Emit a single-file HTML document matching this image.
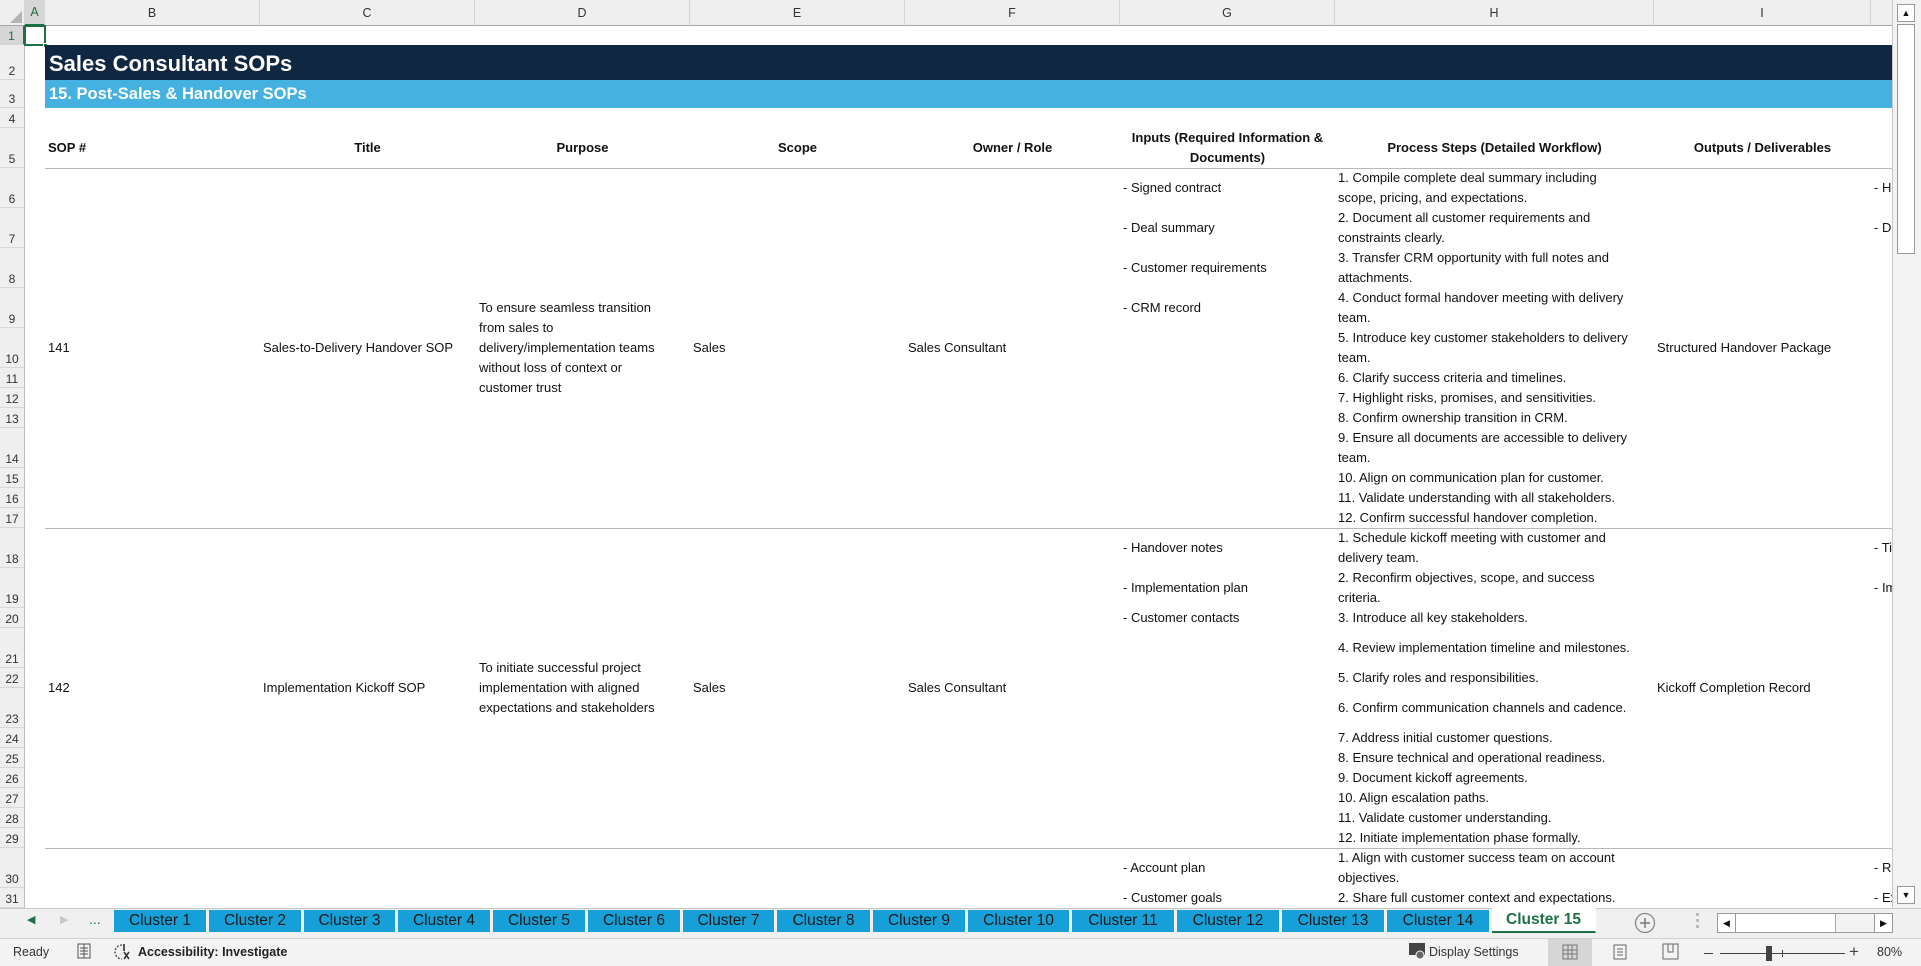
<!DOCTYPE html>
<html><head><meta charset="utf-8"><style>
*{margin:0;padding:0;box-sizing:border-box}
body{width:1921px;height:966px;overflow:hidden;background:#fff;font-family:"Liberation Sans",sans-serif;font-size:13px;color:#111;position:relative}
.a{position:absolute}
.c{position:absolute;display:flex;align-items:center;white-space:nowrap;line-height:20px;overflow:hidden}
.rh{position:absolute;left:0;width:25px;background:#efefef;border-bottom:1px solid #d8d8d8;border-right:1px solid #bdbdbd;display:flex;align-items:flex-end;justify-content:center;font-size:12px;color:#333;padding-bottom:1px}
.ch{position:absolute;top:0;height:26px;background:#efefef;border-right:1px solid #d4d4d4;border-bottom:1px solid #a8a8a8;display:flex;align-items:center;justify-content:center;font-size:12.5px;color:#333}
.hd{font-weight:bold;justify-content:center;text-align:center;line-height:20px}
.hl{position:absolute;left:45px;width:1847px;height:1px;background:#b8b8b8}
.tab{position:absolute;top:910px;height:22px;background:#17a0d8;color:#1a1a1a;font-size:15.5px;display:flex;align-items:center;justify-content:center;border-right:1px solid #fff}
.sb{position:absolute;top:938px;height:28px;display:flex;align-items:center;font-size:12.5px;color:#333}
</style></head><body>

<!-- column headers -->
<div class="ch" style="left:0;width:25px"><svg width="12" height="12" style="position:absolute;right:2px;bottom:2px"><path d="M12 0V12H0Z" fill="#b5b5b5"/></svg></div>
<div class="ch" style="left:25px;width:20px;background:#d6d6d6;color:#1e6e3e;border-bottom:2px solid #1e7145">A</div>
<div class="ch" style="left:45px;width:215px">B</div>
<div class="ch" style="left:260px;width:215px">C</div>
<div class="ch" style="left:475px;width:215px">D</div>
<div class="ch" style="left:690px;width:215px">E</div>
<div class="ch" style="left:905px;width:215px">F</div>
<div class="ch" style="left:1120px;width:215px">G</div>
<div class="ch" style="left:1335px;width:319px">H</div>
<div class="ch" style="left:1654px;width:217px">I</div>
<div class="ch" style="left:1871px;width:25px"></div>

<!-- row headers -->
<div class="rh" style="top:26px;height:19px;background:#d6d6d6;color:#1e6e3e;border-right:2px solid #1e7145">1</div>
<div class="rh" style="top:45px;height:35px">2</div>
<div class="rh" style="top:80px;height:28px">3</div>
<div class="rh" style="top:108px;height:20px">4</div>
<div class="rh" style="top:128px;height:40px">5</div>
<div class="rh" style="top:168px;height:40px">6</div>
<div class="rh" style="top:208px;height:40px">7</div>
<div class="rh" style="top:248px;height:40px">8</div>
<div class="rh" style="top:288px;height:40px">9</div>
<div class="rh" style="top:328px;height:40px">10</div>
<div class="rh" style="top:368px;height:20px">11</div>
<div class="rh" style="top:388px;height:20px">12</div>
<div class="rh" style="top:408px;height:20px">13</div>
<div class="rh" style="top:428px;height:40px">14</div>
<div class="rh" style="top:468px;height:20px">15</div>
<div class="rh" style="top:488px;height:20px">16</div>
<div class="rh" style="top:508px;height:20px">17</div>
<div class="rh" style="top:528px;height:40px">18</div>
<div class="rh" style="top:568px;height:40px">19</div>
<div class="rh" style="top:608px;height:20px">20</div>
<div class="rh" style="top:628px;height:40px">21</div>
<div class="rh" style="top:668px;height:20px">22</div>
<div class="rh" style="top:688px;height:40px">23</div>
<div class="rh" style="top:728px;height:20px">24</div>
<div class="rh" style="top:748px;height:20px">25</div>
<div class="rh" style="top:768px;height:20px">26</div>
<div class="rh" style="top:788px;height:20px">27</div>
<div class="rh" style="top:808px;height:20px">28</div>
<div class="rh" style="top:828px;height:20px">29</div>
<div class="rh" style="top:848px;height:40px">30</div>
<div class="rh" style="top:888px;height:20px">31</div>

<!-- selected cell A1 -->
<div class="a" style="left:24px;top:25px;width:22px;height:21px;border:2px solid #1e7145"></div>
<div class="a" style="left:43px;top:43px;width:5px;height:5px;background:#1e7145;border:1px solid #fff"></div>

<!-- title bars -->
<div class="c" style="left:45px;top:45px;width:1847px;height:35px;background:#0f2740;color:#fff;font-weight:bold;font-size:22px;padding-left:4px;padding-top:3px">Sales Consultant SOPs</div>
<div class="c" style="left:45px;top:80px;width:1847px;height:28px;background:#45b1e0;color:#fff;font-weight:bold;font-size:16.5px;padding-left:4px">15. Post-Sales &amp; Handover SOPs</div>

<!-- header row 5 -->
<div class="c" style="left:48px;top:128px;height:40px;font-weight:bold">SOP #</div>
<div class="c hd" style="left:260px;top:128px;width:215px;height:40px">Title</div>
<div class="c hd" style="left:475px;top:128px;width:215px;height:40px">Purpose</div>
<div class="c hd" style="left:690px;top:128px;width:215px;height:40px">Scope</div>
<div class="c hd" style="left:905px;top:128px;width:215px;height:40px">Owner / Role</div>
<div class="c hd" style="left:1120px;top:128px;width:215px;height:40px">Inputs (Required Information &amp;<br>Documents)</div>
<div class="c hd" style="left:1335px;top:128px;width:319px;height:40px">Process Steps (Detailed Workflow)</div>
<div class="c hd" style="left:1654px;top:128px;width:217px;height:40px">Outputs / Deliverables</div>

<div class="hl" style="top:168px"></div>
<div class="hl" style="top:528px"></div>
<div class="hl" style="top:848px"></div>

<!-- block 1 -->
<div class="c" style="left:48px;top:168px;height:360px">141</div>
<div class="c" style="left:263px;top:168px;height:360px">Sales-to-Delivery Handover SOP</div>
<div class="c" style="left:479px;top:168px;height:360px">To ensure seamless transition<br>from sales to<br>delivery/implementation teams<br>without loss of context or<br>customer trust</div>
<div class="c" style="left:693px;top:168px;height:360px">Sales</div>
<div class="c" style="left:908px;top:168px;height:360px">Sales Consultant</div>
<div class="c" style="left:1657px;top:168px;height:360px">Structured Handover Package</div>

<div class="c" style="left:1123px;top:168px;height:40px">- Signed contract</div>
<div class="c" style="left:1123px;top:208px;height:40px">- Deal summary</div>
<div class="c" style="left:1123px;top:248px;height:40px">- Customer requirements</div>
<div class="c" style="left:1123px;top:288px;height:40px">- CRM record</div>

<div class="c" style="left:1338px;top:168px;height:40px">1. Compile complete deal summary including<br>scope, pricing, and expectations.</div>
<div class="c" style="left:1338px;top:208px;height:40px">2. Document all customer requirements and<br>constraints clearly.</div>
<div class="c" style="left:1338px;top:248px;height:40px">3. Transfer CRM opportunity with full notes and<br>attachments.</div>
<div class="c" style="left:1338px;top:288px;height:40px">4. Conduct formal handover meeting with delivery<br>team.</div>
<div class="c" style="left:1338px;top:328px;height:40px">5. Introduce key customer stakeholders to delivery<br>team.</div>
<div class="c" style="left:1338px;top:368px;height:20px">6. Clarify success criteria and timelines.</div>
<div class="c" style="left:1338px;top:388px;height:20px">7. Highlight risks, promises, and sensitivities.</div>
<div class="c" style="left:1338px;top:408px;height:20px">8. Confirm ownership transition in CRM.</div>
<div class="c" style="left:1338px;top:428px;height:40px">9. Ensure all documents are accessible to delivery<br>team.</div>
<div class="c" style="left:1338px;top:468px;height:20px">10. Align on communication plan for customer.</div>
<div class="c" style="left:1338px;top:488px;height:20px">11. Validate understanding with all stakeholders.</div>
<div class="c" style="left:1338px;top:508px;height:20px">12. Confirm successful handover completion.</div>

<div class="c" style="left:1874px;top:168px;height:40px;width:18px">- Handover</div>
<div class="c" style="left:1874px;top:208px;height:40px;width:18px">- Deal</div>

<!-- block 2 -->
<div class="c" style="left:48px;top:528px;height:320px">142</div>
<div class="c" style="left:263px;top:528px;height:320px">Implementation Kickoff SOP</div>
<div class="c" style="left:479px;top:528px;height:320px">To initiate successful project<br>implementation with aligned<br>expectations and stakeholders</div>
<div class="c" style="left:693px;top:528px;height:320px">Sales</div>
<div class="c" style="left:908px;top:528px;height:320px">Sales Consultant</div>
<div class="c" style="left:1657px;top:528px;height:320px">Kickoff Completion Record</div>

<div class="c" style="left:1123px;top:528px;height:40px">- Handover notes</div>
<div class="c" style="left:1123px;top:568px;height:40px">- Implementation plan</div>
<div class="c" style="left:1123px;top:608px;height:20px">- Customer contacts</div>

<div class="c" style="left:1338px;top:528px;height:40px">1. Schedule kickoff meeting with customer and<br>delivery team.</div>
<div class="c" style="left:1338px;top:568px;height:40px">2. Reconfirm objectives, scope, and success<br>criteria.</div>
<div class="c" style="left:1338px;top:608px;height:20px">3. Introduce all key stakeholders.</div>
<div class="c" style="left:1338px;top:628px;height:40px">4. Review implementation timeline and milestones.</div>
<div class="c" style="left:1338px;top:668px;height:20px">5. Clarify roles and responsibilities.</div>
<div class="c" style="left:1338px;top:688px;height:40px">6. Confirm communication channels and cadence.</div>
<div class="c" style="left:1338px;top:728px;height:20px">7. Address initial customer questions.</div>
<div class="c" style="left:1338px;top:748px;height:20px">8. Ensure technical and operational readiness.</div>
<div class="c" style="left:1338px;top:768px;height:20px">9. Document kickoff agreements.</div>
<div class="c" style="left:1338px;top:788px;height:20px">10. Align escalation paths.</div>
<div class="c" style="left:1338px;top:808px;height:20px">11. Validate customer understanding.</div>
<div class="c" style="left:1338px;top:828px;height:20px">12. Initiate implementation phase formally.</div>

<div class="c" style="left:1874px;top:528px;height:40px;width:18px">- Timeline</div>
<div class="c" style="left:1874px;top:568px;height:40px;width:18px">- Implementation</div>

<!-- block 3 -->
<div class="c" style="left:1123px;top:848px;height:40px">- Account plan</div>
<div class="c" style="left:1123px;top:888px;height:20px">- Customer goals</div>
<div class="c" style="left:1338px;top:848px;height:40px">1. Align with customer success team on account<br>objectives.</div>
<div class="c" style="left:1338px;top:888px;height:20px">2. Share full customer context and expectations.</div>
<div class="c" style="left:1874px;top:848px;height:40px;width:18px">- Review</div>
<div class="c" style="left:1874px;top:888px;height:20px;width:18px">- Expand</div>

<!-- vertical scrollbar -->
<div class="a" style="left:1892px;top:0;width:29px;height:908px;background:#f3f3f3;border-left:1px solid #c8c8c8"></div>
<div class="a" style="left:1897px;top:4px;width:18px;height:18px;background:#fff;border:1px solid #999;font-size:9px;text-align:center;line-height:16px">&#9650;</div>
<div class="a" style="left:1897px;top:24px;width:18px;height:230px;background:#fff;border:1px solid #999"></div>
<div class="a" style="left:1897px;top:886px;width:18px;height:18px;background:#fff;border:1px solid #999;font-size:9px;text-align:center;line-height:16px">&#9660;</div>

<!-- tab bar -->
<div class="a" style="left:0;top:908px;width:1921px;height:30px;background:#f0f0f0;border-top:1px solid #c8c8c8"></div>
<div class="a" style="left:27px;top:913px;color:#1e7145;font-size:11px">&#9664;</div>
<div class="a" style="left:60px;top:913px;color:#c8c8c8;font-size:11px">&#9654;</div>
<div class="a" style="left:89px;top:911px;color:#1e7145;font-size:14px">...</div>
<div class="tab" style="left:114px;width:93px">Cluster 1</div>
<div class="tab" style="left:209px;width:93px">Cluster 2</div>
<div class="tab" style="left:304px;width:92px">Cluster 3</div>
<div class="tab" style="left:398px;width:93px">Cluster 4</div>
<div class="tab" style="left:493px;width:93px">Cluster 5</div>
<div class="tab" style="left:588px;width:93px">Cluster 6</div>
<div class="tab" style="left:683px;width:92px">Cluster 7</div>
<div class="tab" style="left:777px;width:94px">Cluster 8</div>
<div class="tab" style="left:873px;width:93px">Cluster 9</div>
<div class="tab" style="left:968px;width:102px">Cluster 10</div>
<div class="tab" style="left:1072px;width:103px">Cluster 11</div>
<div class="tab" style="left:1177px;width:103px">Cluster 12</div>
<div class="tab" style="left:1282px;width:103px">Cluster 13</div>
<div class="tab" style="left:1387px;width:103px">Cluster 14</div>
<div class="tab" style="left:1492px;top:908px;width:104px;height:25px;background:#fff;color:#1e7145;font-weight:bold;border-bottom:2px solid #1e7145">Cluster 15</div>
<svg class="a" style="left:1634px;top:912px" width="22" height="22"><circle cx="11" cy="11" r="9.5" fill="none" stroke="#888" stroke-width="1.3"/><path d="M11 6V16M6 11H16" stroke="#777" stroke-width="1.5"/></svg>
<div class="a" style="left:1696px;top:913px;width:3px;height:18px;background:repeating-linear-gradient(#bbb 0 3px,transparent 3px 6px)"></div>
<div class="a" style="left:1717px;top:913px;width:176px;height:20px;background:#f3f3f3;border:1px solid #999"></div>
<div class="a" style="left:1717px;top:913px;width:19px;height:20px;background:#fff;border:1px solid #999;font-size:9px;text-align:center;line-height:18px">&#9664;</div>
<div class="a" style="left:1736px;top:914px;width:100px;height:18px;background:#fff;border-right:1px solid #aaa"></div>
<div class="a" style="left:1874px;top:913px;width:19px;height:20px;background:#fff;border:1px solid #999;font-size:9px;text-align:center;line-height:18px">&#9654;</div>

<!-- status bar -->
<div class="a" style="left:0;top:938px;width:1921px;height:28px;background:#f3f3f3;border-top:1px solid #d0d0d0"></div>
<div class="sb" style="left:13px">Ready</div>
<svg class="a" style="left:77px;top:943px" width="14" height="16"><rect x="1" y="1" width="12" height="14" fill="none" stroke="#555"/><path d="M3 5H11M3 8H11M3 11H11M7 1V15" stroke="#555"/></svg>
<svg class="a" style="left:114px;top:942px" width="22" height="20"><path d="M8 3A7 7 0 1 0 8 17" fill="none" stroke="#444" stroke-width="1.3" stroke-dasharray="2 1.5"/><path d="M10 2V9M10 10L15 17M15 10L10 17" stroke="#333" stroke-width="1.6"/></svg>
<div class="sb" style="left:138px;font-weight:bold;color:#222">Accessibility: Investigate</div>
<svg class="a" style="left:1408px;top:942px" width="18" height="18"><rect x="1" y="1" width="16" height="12" fill="#444"/><circle cx="12" cy="13" r="4" fill="#666" stroke="#f3f3f3"/></svg>
<div class="sb" style="left:1429px">Display Settings</div>
<div class="a" style="left:1548px;top:939px;width:44px;height:27px;background:#d6d6d6"></div>
<svg class="a" style="left:1562px;top:944px" width="16" height="16"><path d="M1 1H15V15H1ZM1 6H15M1 10H15M6 1V15M10 1V15" fill="none" stroke="#777"/></svg>
<svg class="a" style="left:1613px;top:944px" width="14" height="16"><rect x="1" y="1" width="12" height="14" fill="none" stroke="#666"/><path d="M4 5H10M4 8H10M4 11H10" stroke="#666"/></svg>
<svg class="a" style="left:1662px;top:943px" width="17" height="17"><path d="M1 1H16V16H1ZM6 1V9H11V1" fill="none" stroke="#666"/></svg>
<div class="a" style="left:1704px;top:953px;width:9px;height:1px;background:#444"></div>
<div class="a" style="left:1720px;top:953px;width:125px;height:1px;background:#444"></div>
<div class="a" style="left:1766px;top:946px;width:6px;height:15px;background:#444"></div>
<div class="a" style="left:1782px;top:950px;width:1px;height:7px;background:#444"></div>
<div class="sb" style="left:1849px;font-size:17px;color:#444">+</div>
<div class="sb" style="left:1877px">80%</div>
</body></html>
